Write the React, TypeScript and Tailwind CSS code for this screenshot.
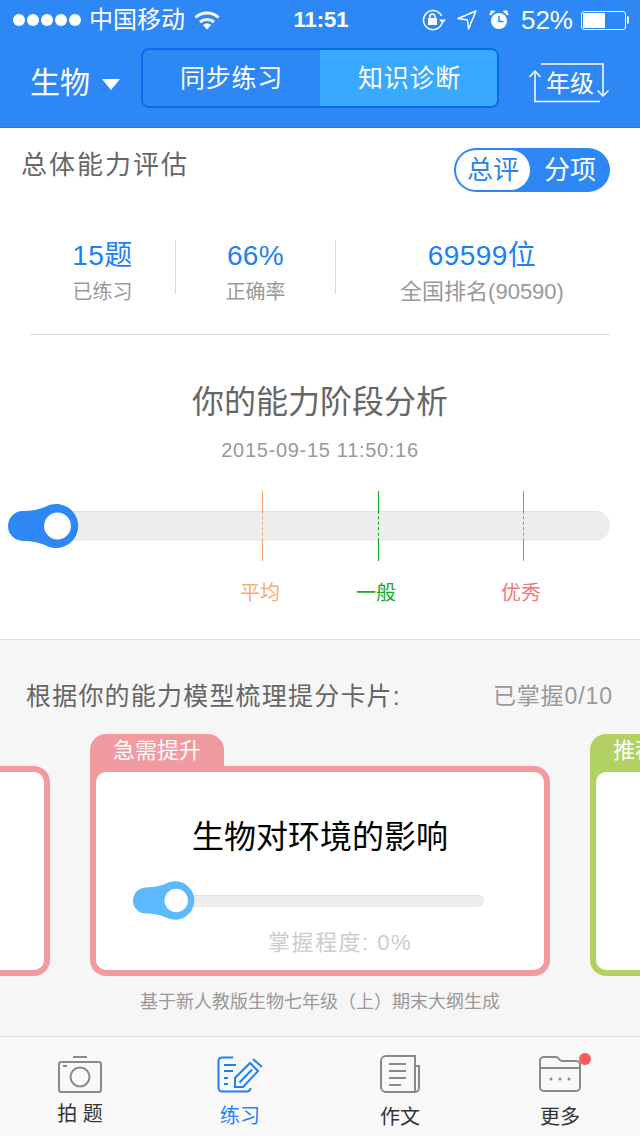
const cjk = "font-['Liberation_Sans','Noto_Sans_CJK_SC',sans-serif]";

const markers = [
  { left: "left-[262px]", line: "bg-[#f5a765]", dash: "border-[#f5a765]", label: "平均", text: "text-[#f5ad78]" },
  { left: "left-[378px]", line: "bg-[#12a520]", dash: "border-[#12a520]", label: "一般", text: "text-[#1fa52c]" },
  { left: "left-[523px]", line: "bg-[#f06a6a]", dash: "border-[#f06a6a]", label: "优秀", text: "text-[#f5777c]" },
];

function Handle({ className }: { className: string }) {
  return (
    <svg viewBox="0 0 71 44" className={className}>
      <path d="M15 7C25 7 32 5 38 2.500A22 22 0 1 1 38 41.500C32 39 25 37 15 37A15 15 0 0 1 15 7Z" />
      <circle cx="49.500" cy="22" r="13.400" fill="#fff" />
    </svg>
  );
}

function Stat({ value, label, className, labelClass }: { value: string; label: string; className: string; labelClass: string }) {
  return (
    <div className={`flex flex-col items-center ${className}`}>
      <span className="text-[28px] leading-8 tracking-[0.4px] text-[#1e80f6]">{value}</span>
      <span className={`mt-[8px] leading-6 text-[#999] ${labelClass}`}>{label}</span>
    </div>
  );
}

function Card({ tone, tab, children }: { tone: "red" | "green"; tab: string; children?: React.ReactNode }) {
  const bg = tone === "red" ? "bg-[#f19a9f]" : "bg-[#b1d162]";
  return (
    <div className="flex w-[460px] shrink-0 flex-col items-start">
      <div className={`flex h-[33px] w-[134px] items-center justify-center rounded-t-[16px] text-[22px] text-white ${bg}`}>
        {tab}
      </div>
      <div className={`-mt-px h-[210px] w-full rounded-[16px] rounded-tl-none p-[6px] ${bg}`}>
        <div className="h-full rounded-[10px] bg-white">{children}</div>
      </div>
    </div>
  );
}

function NavItem({ icon, label, active, className }: { icon: React.ReactNode; label: string; active?: boolean; className: string }) {
  return (
    <div className="flex flex-col items-center">
      {icon}
      <span className={`text-[20px] leading-6 ${active ? "text-[#2b83f0]" : "text-[#333]"} ${className}`}>{label}</span>
    </div>
  );
}

export default function App() {
  return (
    <div className={`flex h-[1136px] w-[640px] flex-col overflow-hidden bg-white ${cjk}`}>
      <header className="h-[128px] shrink-0 border-b border-[#1f78e8] bg-[#2d88f6] text-white">
        <div className="grid h-[40px] grid-cols-[1fr_auto_1fr] items-center pl-[13px] pr-[11px]">
          <div className="flex items-center">
            <div className="flex gap-[2px]">
              {[0, 1, 2, 3, 4].map((i) => (
                <span key={i} className="size-3 rounded-full bg-white" />
              ))}
            </div>
            <span className="ml-[8px] text-[24px] leading-none">中国移动</span>
            <svg viewBox="0 0 26 20" className="ml-[9px] h-5 w-[26px]" fill="none" stroke="#fff" strokeWidth="3">
              <path d="M1.500 7.500C8 1.500 18 1.500 24.500 7.500" />
              <path d="M6 12C10 8.500 16 8.500 20 12" />
              <path d="M9.500 15L13 19L16.500 15C14.500 13.500 11.500 13.500 9.500 15Z" fill="#fff" strokeWidth="1" />
            </svg>
          </div>
          <span className="text-[22px] font-bold leading-none">11:51</span>
          <div className="flex items-center justify-end">
            <svg viewBox="0 0 24 22" className="h-[22px] w-6" fill="none" stroke="#fff" strokeWidth="1.500">
              <path d="M20 14A9.500 9.500 0 1 1 19.500 7" />
              <path d="M17 10.500H24L20.500 14.500Z" fill="#fff" stroke="none" />
              <rect x="6" y="9" width="9" height="7" fill="#fff" stroke="none" />
              <path d="M8 9V7.500A2.500 2.500 0 0 1 13 7.500V9" />
            </svg>
            <svg viewBox="0 0 20 20" className="ml-[11px] size-5" fill="none" stroke="#fff" strokeWidth="1.500" strokeLinejoin="round">
              <path d="M19 1L1 8.500L10.500 10L11.500 19Z" />
            </svg>
            <svg viewBox="0 0 20 20" className="ml-3 size-5" fill="#fff">
              <circle cx="10" cy="11" r="8" />
              <path d="M1 5L5 1.500L2.500 1ZM19 5L15 1.500L17.500 1Z" stroke="#fff" strokeWidth="1.500" />
              <path d="M10 6V11.500H14.500" fill="none" stroke="#2d88f6" strokeWidth="1.500" />
            </svg>
            <span className="ml-3 text-[26px] leading-none">52%</span>
            <div className="ml-2 flex items-center">
              <div className="h-[19px] w-[45px] rounded-[3px] border border-white p-px">
                <div className="h-full w-[22px] bg-white" />
              </div>
              <span className="ml-px h-2 w-[2px] rounded-r-sm bg-white" />
            </div>
          </div>
        </div>

        <div className="flex h-[87px] items-center pb-[11px] pl-[30px]">
          <span className="mt-[10px] text-[30px] leading-none">生物</span>
          <svg viewBox="0 0 18 11" className="ml-3 mt-[12px] h-[11px] w-[18px]" fill="#fff">
            <path d="M0 0H18L9 11Z" />
          </svg>
          <div className="ml-[21px] grid h-[60px] w-[358px] grid-cols-2 overflow-hidden rounded-[8px] border-2 border-[#0a6cf0] text-[25px] tracking-[0.8px]">
            <div className="flex items-center justify-center pt-px">同步练习</div>
            <div className="flex items-center justify-center bg-[#39a9ff] pl-[2px] pt-px">知识诊断</div>
          </div>
          <div className="relative ml-[29px] mt-[12px] h-[42px] w-[82px]">
            <svg viewBox="0 0 82 42" className="h-[42px] w-[82px]" fill="none" stroke="#fff" strokeWidth="1.500">
              <path d="M7 8V38.500H72M13 1H75V33" />
              <path d="M1.500 14L7 8L12.500 14M69.500 27.500L75 33L80.500 27.500" />
            </svg>
            <span className="absolute inset-0 flex items-center justify-center pl-[2px] text-[24px] leading-none">年级</span>
          </div>
        </div>
      </header>

      <section className="h-[511px] shrink-0">
        <div className="flex justify-between pl-[21px] pr-[30px] pt-5">
          <h2 className="pt-px text-[26px] font-normal leading-8 tracking-[2px] text-[#666]">总体能力评估</h2>
          <div className="flex h-[44px] w-[156px] items-center rounded-full bg-[#2d88f6] p-[2px] text-[26px]">
            <span className="flex h-10 w-[74px] items-center justify-center rounded-full bg-white text-[#2b83f0]">总评</span>
            <span className="flex-1 pl-[2px] text-center text-white">分项</span>
          </div>
        </div>

        <div className="mt-[48px] flex items-start">
          <Stat value="15题" label="已练习" labelClass="text-[20px]" className="w-[175px] pl-[30px]" />
          <div className="h-[54px] w-px bg-[#ddd]" />
          <Stat value="66%" label="正确率" labelClass="text-[20px]" className="w-[159px]" />
          <div className="h-[54px] w-px bg-[#ddd]" />
          <Stat value="69599位" label="全国排名(90590)" labelClass="text-[22px]" className="w-[292px]" />
        </div>
        <div className="mx-[30px] mt-[30px] h-px bg-[#ddd]" />

        <h1 className="mt-[47px] text-center text-[32px] font-normal leading-10 text-[#666]">你的能力阶段分析</h1>
        <p className="mt-[16px] text-center text-[20px] leading-6 tracking-[0.7px] text-[#999]">2015-09-15 11:50:16</p>

        <div className="relative mt-[29px] h-[70px]">
          <div className="absolute left-[8px] right-[30px] top-[20px] h-[30px] rounded-full border-t border-[#e0e0e0] bg-[#ededed]" />
          <Handle className="absolute left-[8px] top-[13px] h-[44px] w-[71px] fill-[#2d88f6]" />
          {markers.map((m) => (
            <div key={m.label} className={`absolute top-0 flex h-[70px] flex-col ${m.left}`}>
              <span className={`h-5 w-px ${m.line}`} />
              <span className={`h-[30px] w-px border-l border-dashed ${m.dash}`} />
              <span className={`h-5 w-px ${m.line}`} />
              <span className={`absolute left-[-24px] top-[90px] w-[44px] text-center text-[20px] leading-6 ${m.text}`}>
                {m.label}
              </span>
            </div>
          ))}
        </div>
      </section>

      <section className="flex h-[397px] shrink-0 flex-col border-t border-[#ddd] bg-[#f6f6f6]">
        <div className="flex items-center justify-between pl-[26px] pr-[27px] pt-[40px]">
          <span className="text-[25px] leading-8 tracking-[1.200px] text-[#666]">根据你的能力模型梳理提分卡片:</span>
          <span className="text-[23px] leading-8 tracking-[0.900px] text-[#999]">已掌握0/10</span>
        </div>

        <div className="mt-[22px] flex justify-center gap-10 overflow-hidden">
          <Card tone="red" tab="急需提升" />
          <Card tone="red" tab="急需提升">
            <div className="flex h-full flex-col items-start">
              <p className="mt-[45px] w-full text-center text-[32px] leading-10 text-black">生物对环境的影响</p>
              <div className="relative ml-[37px] mt-[24px] h-[39px] w-[351px]">
                <div className="absolute inset-x-0 top-[14px] h-3 rounded-full border-t border-[#e2e2e2] bg-[#ededed]" />
                <Handle className="absolute left-0 top-0 h-[39px] w-[62px] fill-[#5cbafc]" />
              </div>
              <p className="ml-[172px] mt-[9px] text-[22px] leading-7 tracking-[1.500px] text-[#ccc]">掌握程度: 0%</p>
            </div>
          </Card>
          <Card tone="green" tab="推荐提升" />
        </div>

        <p className="mt-[14px] text-center text-[18px] leading-6 text-[#999]">基于新人教版生物七年级（上）期末大纲生成</p>
      </section>

      <nav className="grid flex-1 grid-cols-4 border-t border-[#ddd] bg-[#f9f9f9]">
        <NavItem
          label="拍 题"
          className="mt-[8px]"
          icon={
            <svg viewBox="0 0 44 38" className="mt-[19px] h-[38px] w-[44px]" fill="none" stroke="#8a8a8a" strokeWidth="2">
              <path d="M15 1H29" />
              <rect x="1" y="6" width="42" height="30" rx="2" />
              <circle cx="22" cy="21" r="9.500" />
              <path d="M5 10H9" />
            </svg>
          }
        />
        <NavItem
          label="练习"
          active
          className="mt-[10px]"
          icon={
            <svg viewBox="0 0 46 38" className="mt-[19px] h-[38px] w-[46px]" fill="none" stroke="#1f80f2" strokeWidth="2">
              <path d="M16 1.500H5A3.500 3.500 0 0 0 1.500 5V32A3.500 3.500 0 0 0 5 35.500H30A3.500 3.500 0 0 0 33.500 32" />
              <path d="M7 9H19M7 15H16M7 22H11M7 28H11" />
              <path d="M18 31V22L33 7L41 15L26 31Z" />
              <path d="M22.500 26.500L35 13.500M36 3L45 11" />
            </svg>
          }
        />
        <NavItem
          label="作文"
          className="mt-[12px]"
          icon={
            <svg viewBox="0 0 40 38" className="mt-[18px] h-[38px] w-[40px]" fill="none" stroke="#8a8a8a" strokeWidth="2">
              <path d="M35 1H6A5 5 0 0 0 1 6V32A5 5 0 0 0 6 37H35V1Z" />
              <path d="M35 11H39V33A4 4 0 0 1 35 37" />
              <path d="M9 9H26M9 16H26M9 23H26M9 30H21" />
            </svg>
          }
        />
        <NavItem
          label="更多"
          className="mt-[12px]"
          icon={
            <div className="relative mt-[18px] h-[38px] w-[44px]">
              <svg viewBox="0 0 42 36" className="ml-[1px] mt-[1px] h-9 w-[42px]" fill="none" stroke="#8a8a8a" strokeWidth="2">
                <path d="M1 12V6A4 4 0 0 1 5 1H17C20 1 20 5 23 5H37A4 4 0 0 1 41 9V31A4 4 0 0 1 37 35H5A4 4 0 0 1 1 31V12H41" />
                <circle cx="12" cy="23" r="1.500" fill="#8a8a8a" stroke="none" />
                <circle cx="21" cy="23" r="1.500" fill="#8a8a8a" stroke="none" />
                <circle cx="30" cy="23" r="1.500" fill="#8a8a8a" stroke="none" />
              </svg>
              <span className="absolute -top-[2px] left-[41px] size-3 rounded-full bg-[#fb5a5e]" />
            </div>
          }
        />
      </nav>
    </div>
  );
}
